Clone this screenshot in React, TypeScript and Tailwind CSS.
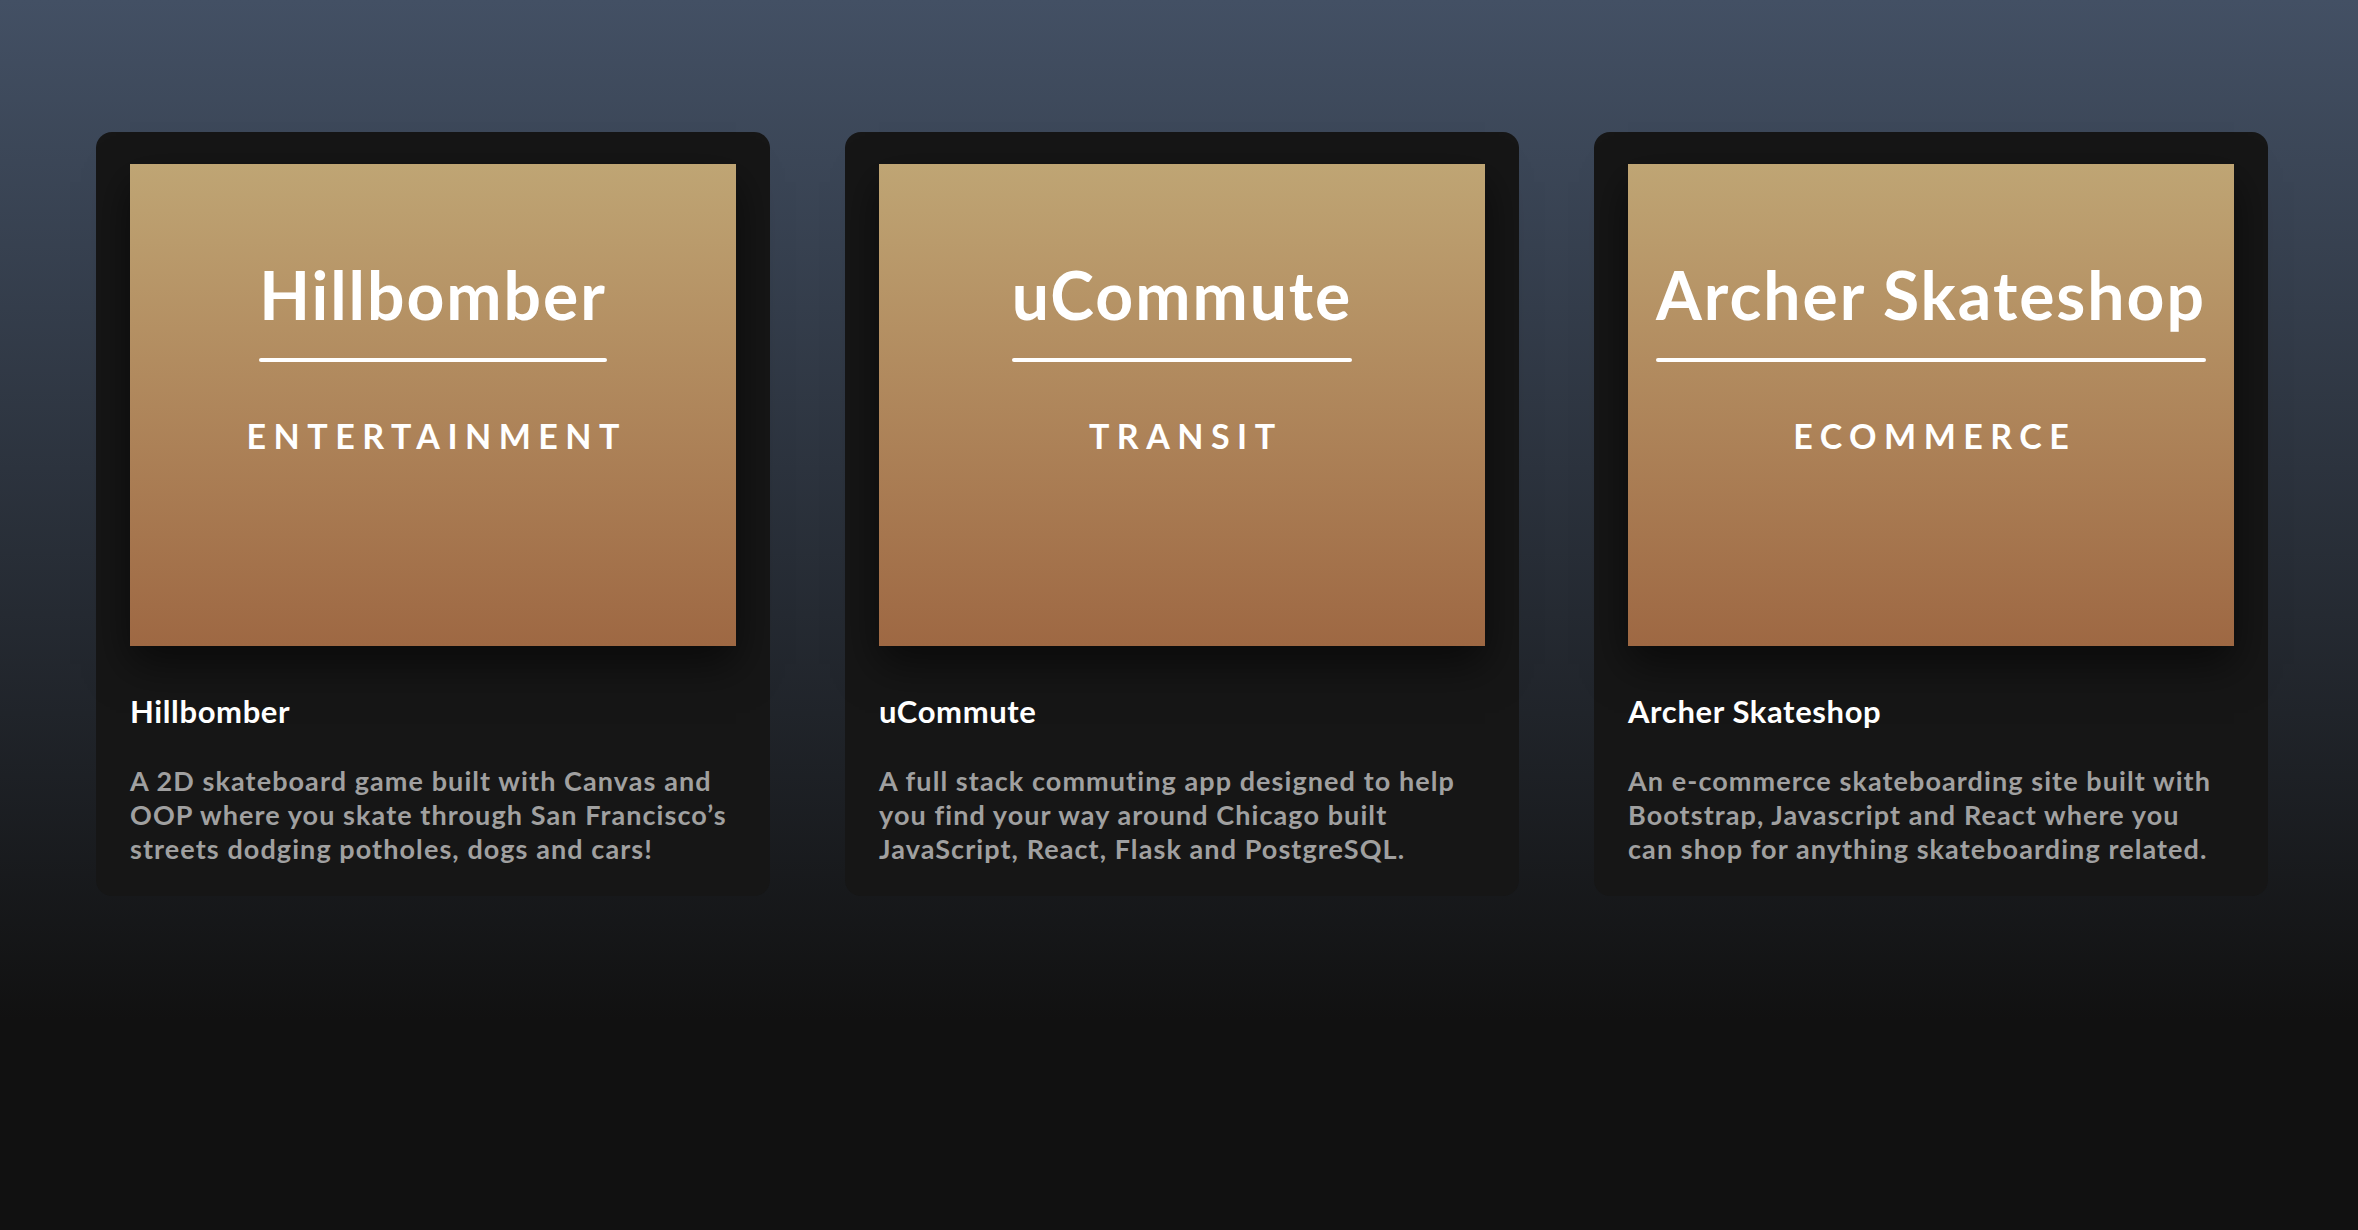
const projects = [
  {
    name: "Hillbomber",
    category: "ENTERTAINMENT",
    lines: [
      "A 2D skateboard game built with Canvas and",
      "OOP where you skate through San Francisco’s",
      "streets dodging potholes, dogs and cars!",
    ],
  },
  {
    name: "uCommute",
    category: "TRANSIT",
    lines: [
      "A full stack commuting app designed to help",
      "you find your way around Chicago built",
      "JavaScript, React, Flask and PostgreSQL.",
    ],
  },
  {
    name: "Archer Skateshop",
    category: "ECOMMERCE",
    lines: [
      "An e-commerce skateboarding site built with",
      "Bootstrap, Javascript and React where you",
      "can shop for anything skateboarding related.",
    ],
  },
];

const ProjectCard = ({ project }: { project: (typeof projects)[number] }) => {
  return (
    <div className="rounded-2xl bg-[#161616] px-[34px] pt-[32px] pb-[30px]">
      {/* Cover */}
      <div className="flex h-[482px] flex-col items-center bg-gradient-to-b from-[#bfa574] to-[#9e6843] pt-[98px] shadow-[0_18px_40px_rgba(0,0,0,0.55)]">
        <div className="inline-flex flex-col items-center">
          <h2 className="text-[66px] leading-none font-bold tracking-[0.03em] text-white">{project.name}</h2>
          <div className="mt-[30px] h-1 w-full rounded-full bg-white" />
        </div>
        <p className="mt-[57px] pl-[0.22em] text-[34px] leading-none font-bold tracking-[0.22em] text-white">
          {project.category}
        </p>
      </div>

      {/* Details */}
      <h3 className="mt-[50px] text-[31px] leading-none font-bold tracking-[0.02em] text-white">{project.name}</h3>
      <p className="mt-[37px] text-[27px] leading-[34px] font-bold tracking-[0.04em] text-[#a0a0a0]">
        {project.lines.map((line, i) => (
          <span key={i} className="block whitespace-nowrap">
            {line}
          </span>
        ))}
      </p>
    </div>
  );
};

export default function App() {
  return (
    <div
      className="min-h-screen w-full bg-[linear-gradient(to_bottom,#435064_0px,#111111_1020px)] pt-[132px] pr-[90px] pb-20 pl-[96px]"
      style={{ fontFamily: "Lato, 'Open Sans', sans-serif" }}
    >
      <div className="grid grid-cols-3 gap-[75px]">
        {projects.map((p) => (
          <ProjectCard key={p.name} project={p} />
        ))}
      </div>
    </div>
  );
}
